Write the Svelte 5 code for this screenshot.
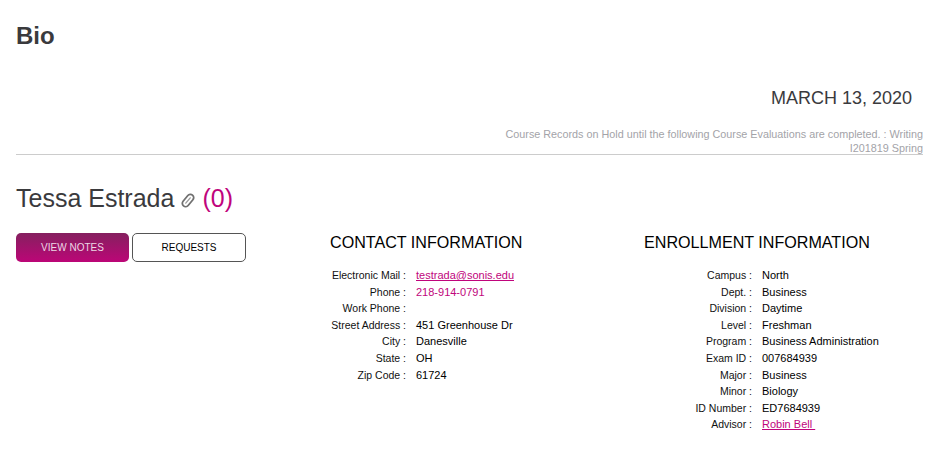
<script>
    const contact = [
        { label: 'Electronic Mail', value: 'testrada@sonis.edu', kind: 'link' },
        { label: 'Phone', value: '218-914-0791', kind: 'accent' },
        { label: 'Work Phone', value: '' },
        { label: 'Street Address', value: '451 Greenhouse Dr' },
        { label: 'City', value: 'Danesville' },
        { label: 'State', value: 'OH' },
        { label: 'Zip Code', value: '61724' }
    ];

    const enrollment = [
        { label: 'Campus', value: 'North' },
        { label: 'Dept.', value: 'Business' },
        { label: 'Division', value: 'Daytime' },
        { label: 'Level', value: 'Freshman' },
        { label: 'Program', value: 'Business Administration' },
        { label: 'Exam ID', value: '007684939' },
        { label: 'Major', value: 'Business' },
        { label: 'Minor', value: 'Biology' },
        { label: 'ID Number', value: 'ED7684939' },
        { label: 'Advisor', value: 'Robin Bell ', kind: 'link' }
    ];
</script>

{#snippet infoRows(rows)}
    {#each rows as row}
        <div class="row">
            <span class="label">{row.label} :</span>
            {#if row.kind === 'link'}
                <a href="#top" class="value accent">{row.value}</a>
            {:else}
                <span class="value" class:accent={row.kind === 'accent'}>{row.value}</span>
            {/if}
        </div>
    {/each}
{/snippet}

<main class="page">
    <h1>Bio</h1>
    <div class="date">MARCH 13, 2020</div>
    <p class="notice">Course Records on Hold until the following Course Evaluations are completed. : Writing<br />I201819 Spring</p>
    <hr />

    <div class="name">
        <span>Tessa Estrada</span>
        <svg class="clip" width="14" height="15" viewBox="0 0 14 15" aria-hidden="true">
            <g transform="rotate(40 7 7.500)" fill="none" stroke-linecap="round">
                <rect x="3.700" y="0.500" width="6.600" height="14" rx="3.300" stroke="#707070" stroke-width="1.800" />
                <path d="M7 4v7" stroke="#999" stroke-width="1.300" />
            </g>
        </svg>
        <span class="count">(0)</span>
    </div>

    <div class="columns">
        <div class="buttons">
            <button class="primary">VIEW NOTES</button>
            <button class="secondary">REQUESTS</button>
        </div>

        <section class="contact">
            <h2>CONTACT INFORMATION</h2>
            <div class="rows">{@render infoRows(contact)}</div>
        </section>

        <section class="enrollment">
            <h2>ENROLLMENT INFORMATION</h2>
            <div class="rows">{@render infoRows(enrollment)}</div>
        </section>
    </div>
</main>

<style>
    :global(body) {
        background: #fff;
    }

    .page {
        height: 452px;
        box-sizing: border-box;
        padding: 22px 13px 0 16px;
        font-family: "Liberation Sans", Arial, sans-serif;
        color: #3a3a3d;
        overflow: hidden;
    }

    h1 {
        margin: 0;
        font-size: 24px;
        line-height: 28px;
        font-weight: 700;
    }

    .date {
        margin-top: 38px;
        padding-right: 11px;
        text-align: right;
        font-size: 18px;
        line-height: 20px;
    }

    .notice {
        margin: 19px 0 0;
        text-align: right;
        font-size: 10.8px;
        line-height: 14px;
        color: #a3a3a8;
    }

    hr {
        margin: -1px 0 0;
        border: none;
        border-top: 1px solid #ccc;
    }

    .name {
        display: flex;
        align-items: center;
        margin-top: 28px;
        font-size: 25px;
        line-height: 30px;
    }

    .clip {
        margin: 4px 7px 0 7px;
    }

    .count {
        color: #c0047c;
    }

    .columns {
        display: flex;
        margin-top: 20px;
    }

    .buttons {
        display: flex;
        flex: 0 0 314px;
        align-items: flex-start;
        gap: 2px;
    }

    button {
        height: 29px;
        box-sizing: border-box;
        border-radius: 5px;
        font-family: inherit;
        font-size: 10px;
    }

    .primary {
        width: 113px;
        border: none;
        background: linear-gradient(180deg, #85205f, #bc0677);
        color: #ecd8e4;
    }

    .secondary {
        width: 114px;
        margin-left: 1px;
        border: 1px solid #555;
        background: #fff;
        color: #000;
    }

    section {
        color: #000;
    }

    .contact {
        flex: 0 0 314px;
    }

    h2 {
        margin: 0;
        font-size: 16.13px;
        line-height: 19px;
        font-weight: 400;
    }

    .rows {
        margin-top: 15px;
        font-size: 11px;
    }

    .row {
        display: grid;
        align-items: center;
        height: 16.55px;
        column-gap: 10px;
        grid-template-columns: 76px auto;
    }

    .enrollment .row {
        grid-template-columns: 108px auto;
    }

    .label {
        font-size: 10.5px;
        text-align: right;
        white-space: nowrap;
        color: #111;
    }

    .value {
        white-space: pre;
    }

    .accent {
        color: #c0047c;
    }
</style>
